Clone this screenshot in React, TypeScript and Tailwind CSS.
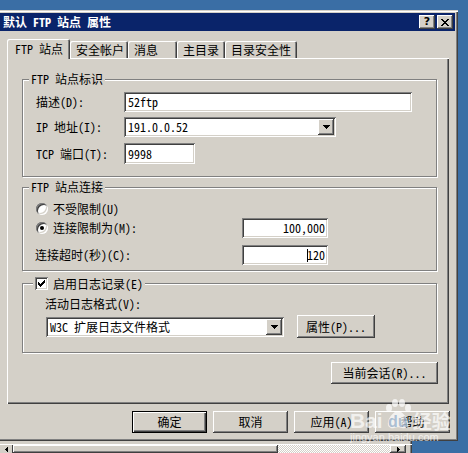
import React from 'react';

const font = "[font-family:'Noto_Sans_Mono_CJK_SC','Noto_Sans_CJK_SC',sans-serif]";
const sunken =
  'bg-white shadow-[inset_1px_1px_0_#808080,inset_-1px_-1px_0_#ffffff,inset_2px_2px_0_#404040,inset_-2px_-2px_0_#d4d0c8]';
const raised =
  'bg-[#d4d0c8] shadow-[inset_-1px_-1px_0_#404040,inset_1px_1px_0_#ffffff,inset_-2px_-2px_0_#808080]';
const etched =
  'relative border border-[#808080] shadow-[inset_1px_1px_0_#ffffff,1px_1px_0_#ffffff]';

const DownArrow = () => (
  <svg width="7" height="4" viewBox="0 0 7 4" shapeRendering="crispEdges">
    <path d="M0 0h7v1H0zM1 1h5v1H1zM2 2h3v1H2zM3 3h1v1H3z" fill="#000" />
  </svg>
);

const Combo = ({ value, className }: { value: string; className: string }) => (
  <div className={`${sunken} ${className} flex items-stretch p-[2px]`}>
    <div className="flex-1 flex items-center pl-[2px] whitespace-nowrap">{value}</div>
    <div className={`${raised} w-[16px] flex items-center justify-center`}>
      <DownArrow />
    </div>
  </div>
);

const Radio = ({ checked }: { checked?: boolean }) => (
  <span className="w-[12px] h-[12px] shrink-0 rounded-full bg-white shadow-[inset_1px_1px_0_#808080,inset_-1px_-1px_0_#ffffff,inset_2px_2px_0_#404040,inset_-2px_-2px_0_#d4d0c8] flex items-center justify-center">
    {checked && <span className="w-[4px] h-[4px] rounded-full bg-black" />}
  </span>
);

const Checkbox = () => (
  <span className={`${sunken} w-[13px] h-[13px] shrink-0 flex items-center justify-center`}>
    <svg width="7" height="7" viewBox="0 0 7 7" shapeRendering="crispEdges">
      <path
        d="M6 0h1v3H6zM5 1h1v3H5zM4 2h1v3H4zM3 3h1v3H3zM2 4h1v3H2zM1 3h1v3H1zM0 2h1v3H0z"
        fill="#000"
      />
    </svg>
  </span>
);

const Tab = ({ label, active, w }: { label: string; active?: boolean; w: string }) => (
  <div
    className={`${w} ${
      active
        ? 'h-[20px] -mb-[1px] relative z-10 pl-[8px]'
        : 'h-[17px] pl-[6px]'
    } bg-[#d4d0c8] rounded-t-[2px] flex items-center whitespace-nowrap shadow-[inset_1px_1px_0_#ffffff,inset_-1px_0_0_#404040,inset_-2px_0_0_#808080]`}
  >
    <span className={active ? 'pb-[1px]' : ''}>{label}</span>
  </div>
);

const Button = ({ label, className, isDefault }: { label: string; className: string; isDefault?: boolean }) => (
  <div
    className={`${className} flex items-center justify-center whitespace-nowrap bg-[#d4d0c8] ${
      isDefault
        ? 'shadow-[inset_0_0_0_1px_#000000,inset_2px_2px_0_#ffffff,inset_-2px_-2px_0_#404040,inset_-3px_-3px_0_#808080]'
        : 'shadow-[inset_-1px_-1px_0_#404040,inset_1px_1px_0_#ffffff,inset_-2px_-2px_0_#808080]'
    }`}
  >
    {label}
  </div>
);

const GroupTitle = ({ children }: { children: React.ReactNode }) => (
  <div className="absolute left-[6px] -top-[7px] h-[12px] px-[2px] bg-[#d4d0c8] flex items-center whitespace-nowrap">
    {children}
  </div>
);

export default function App() {
  return (
    <div className={`w-[468px] h-[453px] overflow-hidden bg-[#3a6ea5] pt-[10px] relative ${font} text-[12px] leading-[12px] text-black`}>
      {/* dialog */}
      <div className="-ml-[3px] w-[461px] h-[431px] bg-[#d4d0c8] p-[3px] flex flex-col shadow-[inset_1px_1px_0_#d4d0c8,inset_2px_2px_0_#ffffff,inset_-1px_-1px_0_#404040,inset_-2px_-2px_0_#808080]">
        <div className="h-[18px] bg-[#0a246a] flex items-center pl-[3px] pr-[2px]">
          <span className="font-bold text-white whitespace-nowrap">默认 FTP 站点 属性</span>
          <div className="ml-auto flex gap-[2px]">
            <div className={`${raised} w-[16px] h-[14px] flex items-center justify-center font-bold text-[11px] [font-family:'DejaVu_Sans',sans-serif]`}>
              ?
            </div>
            <div className={`${raised} w-[16px] h-[14px] flex items-center justify-center`}>
              <svg width="8" height="7" viewBox="0 0 8 7" shapeRendering="crispEdges">
                <path d="M0 0h2v1H0zM6 0h2v1H6zM1 1h2v1H1zM5 1h2v1H5zM2 2h4v1H2zM3 3h2v1H3zM2 4h4v1H2zM1 5h2v1H1zM5 5h2v1H5zM0 6h2v1H0zM6 6h2v1H6z" fill="#000" />
              </svg>
            </div>
          </div>
        </div>

        {/* tabs */}
        <div className="mt-[8px] pl-[7px] h-[19px] flex items-end">
          <Tab label="FTP 站点" active w="w-[63px]" />
          <Tab label="安全帐户" w="w-[58px]" />
          <Tab label="消息" w="w-[49px]" />
          <Tab label="主目录" w="w-[48px]" />
          <Tab label="目录安全性" w="w-[72px]" />
        </div>

        {/* tab page */}
        <div className="ml-[7px] w-[442px] h-[346px] pt-[21px] pl-[15px] flex flex-col shadow-[inset_1px_1px_0_#ffffff,inset_-1px_-1px_0_#404040,inset_-2px_-2px_0_#808080]">
          <div className={`${etched} w-[415px] h-[98px] pt-[12px] flex flex-col`}>
            <GroupTitle>FTP 站点标识</GroupTitle>
            <div className="flex items-center h-[20px]">
              <span className="w-[101px] pl-[13px] whitespace-nowrap">描述(D):</span>
              <div className={`${sunken} w-[288px] h-[20px] flex items-center pl-[4px]`}>52ftp</div>
            </div>
            <div className="flex items-center h-[20px] mt-[5px]">
              <span className="w-[101px] pl-[13px] whitespace-nowrap">IP 地址(I):</span>
              <Combo value="191.0.0.52" className="w-[212px] h-[20px]" />
            </div>
            <div className="flex items-center h-[21px] mt-[6px]">
              <span className="w-[101px] pl-[13px] whitespace-nowrap">TCP 端口(T):</span>
              <div className={`${sunken} w-[71px] h-[21px] flex items-center pl-[4px]`}>9998</div>
            </div>
          </div>

          <div className={`${etched} w-[415px] h-[84px] mt-[10px] pt-[14px] flex flex-col`}>
            <GroupTitle>FTP 站点连接</GroupTitle>
            <div className="flex items-center h-[14px] pl-[13px] gap-[5px]">
              <Radio />
              <span className="whitespace-nowrap">不受限制(U)</span>
            </div>
            <div className="flex items-center h-[20px] mt-[2px]">
              <div className="w-[219px] pl-[13px] flex items-center gap-[5px]">
                <Radio checked />
                <span className="whitespace-nowrap">连接限制为(M):</span>
              </div>
              <div className={`${sunken} w-[86px] h-[20px] flex items-center justify-end pr-[3px]`}>100,000</div>
            </div>
            <div className="flex items-center h-[20px] mt-[7px]">
              <span className="w-[219px] pl-[12px] whitespace-nowrap">连接超时(秒)(C):</span>
              <div className={`${sunken} w-[86px] h-[20px] flex items-center justify-end pr-[3px]`}>
                <span className="w-[1px] h-[13px] bg-black -mr-[1px]" />
                120
              </div>
            </div>
          </div>

          <div className={`${etched} w-[415px] h-[70px] mt-[12px] pt-[14px] flex flex-col`}>
            <div className="absolute left-[10px] -top-[7px] h-[13px] pl-[2px] pr-[2px] bg-[#d4d0c8] flex items-center gap-[5px] whitespace-nowrap">
              <Checkbox />
              <span>启用日志记录(E)</span>
            </div>
            <div className="h-[12px] pl-[22px] whitespace-nowrap">活动日志格式(V):</div>
            <div className="flex items-center h-[23px] mt-[5px] pl-[23px]">
              <Combo value="W3C 扩展日志文件格式" className="w-[238px] h-[20px]" />
              <Button label="属性(P)..." className="ml-[13px] w-[78px] h-[23px]" />
            </div>
          </div>

          <div className="w-[416px] mt-[9px] flex justify-end">
            <Button label="当前会话(R)..." className="w-[107px] h-[22px]" />
          </div>
        </div>

        {/* dialog buttons */}
        <div className="mt-[7px] pl-[132px] flex gap-[6px]">
          <Button label="确定" isDefault className="w-[75px] h-[22px]" />
          <Button label="取消" className="w-[75px] h-[22px]" />
          <Button label="应用(A)" className="w-[75px] h-[22px]" />
          <Button label="帮助" className="w-[75px] h-[22px]" />
        </div>
      </div>

      {/* window behind the dialog */}
      <div className="w-[412px] h-[12px] bg-[#d4d0c8] pt-[3px] shadow-[inset_-1px_0_0_#404040,inset_-2px_0_0_#808080]">
        <div className="flex h-[9px] border-t border-white">
          <div className="w-[12px] flex items-end justify-center pb-[1px]">
            <svg width="4" height="5" viewBox="0 0 4 5" shapeRendering="crispEdges">
              <path d="M3 0h1v5H3zM2 1h1v3H2zM1 2h1v1H1z" fill="#000" />
            </svg>
          </div>
          <div className="w-[1px] bg-[#404040]" />
          <div className={`${raised} w-[265px]`} />
          <div className="w-[112px] bg-[image:repeating-conic-gradient(#ffffff_0_25%,#d4d0c8_0_50%)] bg-[length:2px_2px]" />
          <div className={`${raised} w-[16px] flex items-center justify-center`}>
            <svg width="3" height="5" viewBox="0 0 3 5" shapeRendering="crispEdges">
              <path d="M0 0h1v5H0zM1 1h1v3H1zM2 2h1v1H2z" fill="#000" />
            </svg>
          </div>
        </div>
      </div>

      {/* watermark */}
      <div className="absolute left-[350px] top-[398px] pointer-events-none text-white/70 flex flex-col">
        <div className="flex items-end h-[32px]">
          <span className="font-bold text-[21px] leading-[18px] [font-family:'Liberation_Sans',sans-serif]">Bai</span>
          <div className="relative w-[30px] h-[32px] flex items-end justify-center">
            <svg width="30" height="32" viewBox="0 0 30 32" className="absolute left-0 top-0">
              <ellipse cx="6" cy="10" rx="3" ry="4" fill="rgba(255,255,255,0.7)" />
              <ellipse cx="12" cy="5" rx="3" ry="4" fill="rgba(255,255,255,0.7)" />
              <ellipse cx="19" cy="5" rx="3" ry="4" fill="rgba(255,255,255,0.7)" />
              <ellipse cx="25" cy="10" rx="3" ry="4" fill="rgba(255,255,255,0.7)" />
              <path d="M15 13c-4 0-9 6-10 11-1 5 3 7 6 6 2-1 6-1 8 0 3 1 7-1 6-6-1-5-6-11-10-11z" fill="rgba(255,255,255,0.7)" />
            </svg>
            <span className="relative font-bold text-[16px] leading-[16px] text-[#3a6ea5]/40 [font-family:'Liberation_Sans',sans-serif]">du</span>
          </div>
          <span className="text-[19px] leading-[18px] font-bold">经验</span>
        </div>
        <div className="text-[11px] leading-[11px] mt-[2px] [font-family:'Liberation_Sans',sans-serif]">jingyan.baidu.com</div>
      </div>
    </div>
  );
}
